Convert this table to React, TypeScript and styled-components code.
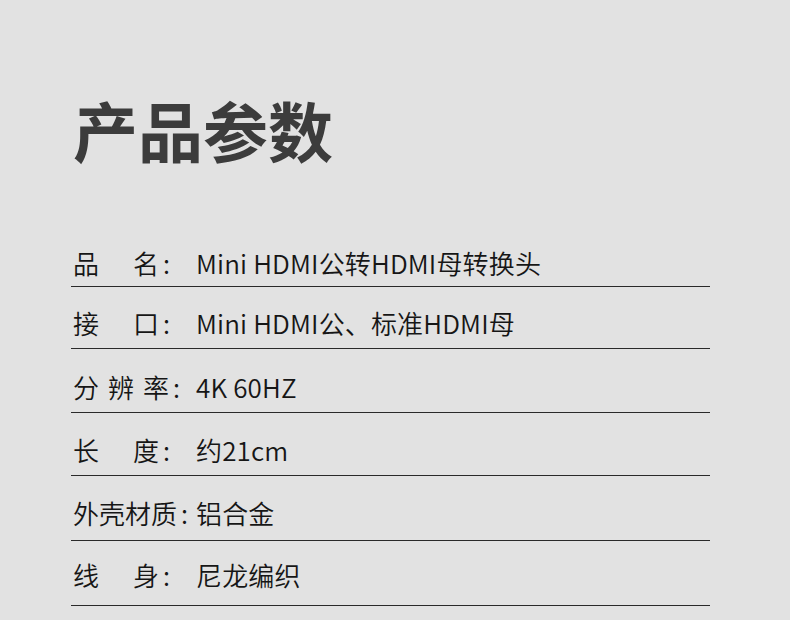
import React from "react";
import styled, { createGlobalStyle } from "styled-components";

const Global = createGlobalStyle`
  html, body { margin: 0; padding: 0; background: #e2e2e2; }
  body { font-family: "Noto Sans CJK SC", "Noto Sans", sans-serif; }
`;

const Page = styled.div`
  width: 790px;
  height: 620px;
  overflow: hidden;
  background: #e2e2e2;
  padding: 96px 80px 0 71px;
  box-sizing: border-box;
`;

const Title = styled.h1`
  margin: 0 0 0 2px;
  font-size: 65px;
  line-height: 66px;
  font-weight: 600;
  color: #3c3c3c;
`;

const Table = styled.div`
  margin-top: 62px;
  width: 639px;
  display: flex;
  flex-direction: column;
`;

const Row = styled.div<{ $h: number; $pb: number }>`
  height: ${(p) => p.$h}px;
  box-sizing: border-box;
  display: flex;
  align-items: flex-end;
  padding: 0 0 ${(p) => p.$pb}px 2px;
  border-bottom: 1px solid #2a2a2a;
  font-size: 26px;
  line-height: 26px;
  font-weight: 350;
  color: #161616;
`;

const Label = styled.div`
  display: flex;
  flex: none;
  width: 123px;
`;

const Chars = styled.div<{ $gap: number }>`
  display: flex;
  gap: ${(p) => p.$gap}px;
`;

const Colon = styled.span`
  margin-left: 4px;
`;

const Value = styled.div`
  white-space: nowrap;
  letter-spacing: 0.15px;
`;

type Item = { label: string[]; gap: number; value: string; h: number; pb: number };

const items: Item[] = [
  { label: ["品", "名"], gap: 34, value: "Mini HDMI公转HDMI母转换头", h: 63, pb: 10 },
  { label: ["接", "口"], gap: 34, value: "Mini HDMI公、标准HDMI母", h: 62, pb: 12 },
  { label: ["分", "辨", "率"], gap: 9, value: "4K 60HZ", h: 64, pb: 12 },
  { label: ["长", "度"], gap: 34, value: "约21cm", h: 63, pb: 12 },
  { label: ["外", "壳", "材", "质"], gap: 0, value: "铝合金", h: 65, pb: 14 },
  { label: ["线", "身"], gap: 34, value: "尼龙编织", h: 65, pb: 17 },
];

export default function App() {
  return (
    <Page>
      <Global />
      <Title>产品参数</Title>
      <Table>
        {items.map((it, i) => (
          <Row key={i} $h={it.h} $pb={it.pb}>
            <Label>
              <Chars $gap={it.gap}>
                {it.label.map((c, j) => (
                  <span key={j}>{c}</span>
                ))}
              </Chars>
              <Colon>:</Colon>
            </Label>
            <Value>{it.value}</Value>
          </Row>
        ))}
      </Table>
    </Page>
  );
}
